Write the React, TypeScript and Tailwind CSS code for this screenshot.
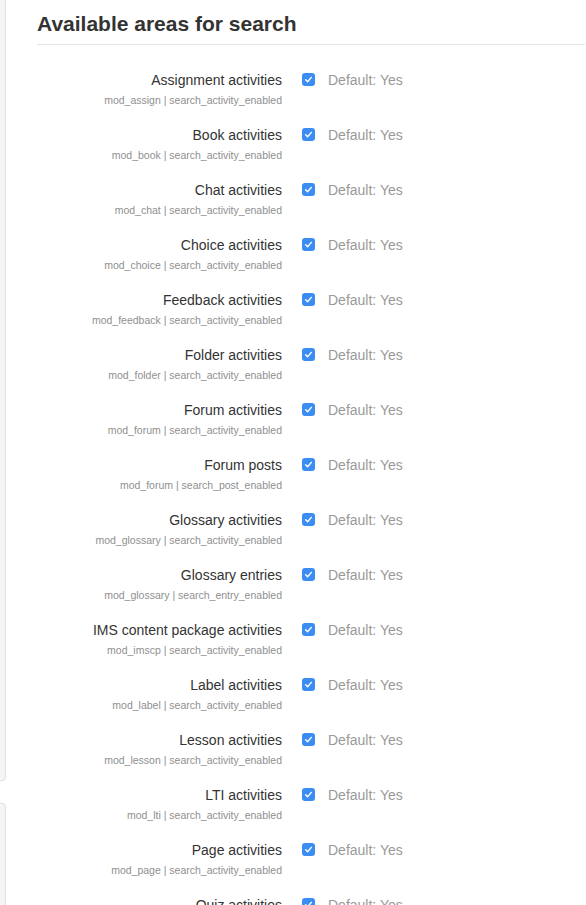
const AREAS: { title: string; component: string; setting: string }[] = [
  { title: "Assignment activities", component: "mod_assign", setting: "search_activity_enabled" },
  { title: "Book activities", component: "mod_book", setting: "search_activity_enabled" },
  { title: "Chat activities", component: "mod_chat", setting: "search_activity_enabled" },
  { title: "Choice activities", component: "mod_choice", setting: "search_activity_enabled" },
  { title: "Feedback activities", component: "mod_feedback", setting: "search_activity_enabled" },
  { title: "Folder activities", component: "mod_folder", setting: "search_activity_enabled" },
  { title: "Forum activities", component: "mod_forum", setting: "search_activity_enabled" },
  { title: "Forum posts", component: "mod_forum", setting: "search_post_enabled" },
  { title: "Glossary activities", component: "mod_glossary", setting: "search_activity_enabled" },
  { title: "Glossary entries", component: "mod_glossary", setting: "search_entry_enabled" },
  { title: "IMS content package activities", component: "mod_imscp", setting: "search_activity_enabled" },
  { title: "Label activities", component: "mod_label", setting: "search_activity_enabled" },
  { title: "Lesson activities", component: "mod_lesson", setting: "search_activity_enabled" },
  { title: "LTI activities", component: "mod_lti", setting: "search_activity_enabled" },
  { title: "Page activities", component: "mod_page", setting: "search_activity_enabled" },
  { title: "Quiz activities", component: "mod_quiz", setting: "search_activity_enabled" },
];

function Checkbox() {
  return (
    <span className="flex h-[13px] w-[13px] items-center justify-center rounded-[3px] bg-[#3b8df3]">
      <svg viewBox="0 0 12 12" className="h-[9px] w-[9px]" fill="none">
        <path d="M2.2 6.4 4.8 8.9 9.8 3.2" stroke="white" strokeWidth="1.9" strokeLinecap="round" strokeLinejoin="round" />
      </svg>
    </span>
  );
}

export default function App() {
  return (
    <div className="flex h-[905px] w-[586px] overflow-hidden bg-white font-['Liberation_Sans',Arial,sans-serif]">
      <div className="flex w-[6px] shrink-0 flex-col">
        <div className="h-[781px] shrink-0 rounded-br-[4px] border-r border-b border-[#e3e3e3] bg-[#f5f5f5]" />
        <div className="mt-[22px] flex-1 rounded-tr-[4px] border-r border-t border-[#e3e3e3] bg-[#f5f5f5]" />
      </div>
      <main className="ml-[31px] mr-[1px] flex-1">
        <h2 className="pt-[11px] pb-[7px] text-[21px] font-bold leading-[26px] text-[#333]">
          Available areas for search
        </h2>
        <div className="border-t border-[#e5e5e5]" />
        <div className="mt-[25px]">
          {AREAS.map((area) => (
            <div key={area.title + area.setting} className="flex h-[55px] items-start">
              <div className="w-[245px] shrink-0 text-right">
                <div className="text-[14px] leading-[20px] text-[#333]">{area.title}</div>
                <div className="mt-[3px] text-[10.5px] leading-[14px] text-[#8f8f8f]">
                  {area.component} | {area.setting}
                </div>
              </div>
              <div className="ml-[20px] mt-[3px] shrink-0">
                <Checkbox />
              </div>
              <div className="ml-[13px] text-[14px] leading-[20px] text-[#999]">Default: Yes</div>
            </div>
          ))}
        </div>
      </main>
    </div>
  );
}
